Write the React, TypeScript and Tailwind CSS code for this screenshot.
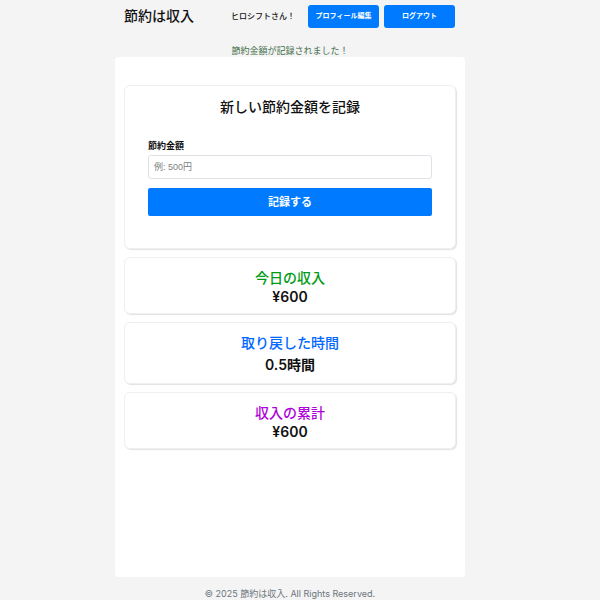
import React from "react";

type StatProps = { title: string; value: string; color: string; lead: string };

function StatCard({ title, value, color, lead }: StatProps) {
  return (
    <section className="rounded-md border border-[#efefef] bg-white pt-2 pb-2 text-center text-[14px] font-medium shadow-[1px_1px_1px_#e2e2e2]">
      <h2 className={`leading-[23px] ${color}`}>{title}</h2>
      <p className={`font-semibold text-[#111] ${lead}`}>{value}</p>
    </section>
  );
}

export default function App() {
  return (
    <div className="min-h-screen bg-[#f4f4f4] pr-5 font-['Inter','Noto_Sans_CJK_JP',sans-serif] text-[#111]">
      <div className="mx-auto max-w-[350px]">
        <header className="flex items-center pt-1 pr-[10px] pl-[9px]">
          <h1 className="text-[14px] leading-[24px] font-medium">節約は収入</h1>
          <nav className="ml-auto flex items-center gap-[5px]">
            <span className="mr-2 text-[8px] font-medium">ヒロシフトさん！</span>
            <button type="button" className="h-[23px] w-[71px] rounded-[3px] bg-[#007bff] text-[7px] font-bold text-white">
              プロフィール編集
            </button>
            <button type="button" className="h-[23px] w-[71px] rounded-[3px] bg-[#007bff] text-[7px] font-bold text-white">
              ログアウト
            </button>
          </nav>
        </header>

        <p role="status" className="mt-4 text-center text-[9px] leading-[13px] text-[#44704a]">
          節約金額が記録されました！
        </p>

        <main className="flex min-h-[520px] flex-col gap-2 rounded-[4px] bg-white px-[9px] pt-7">
          <section className="rounded-md border border-[#efefef] bg-white px-[23px] pt-[9px] pb-8 shadow-[1px_1px_1px_#e2e2e2]">
            <h2 className="text-center text-[14px] leading-[24px] font-medium">新しい節約金額を記録</h2>
            <form className="mt-5 flex flex-col" onSubmit={(e) => e.preventDefault()}>
              <label htmlFor="amount" className="text-[9px] leading-[14px] font-semibold">
                節約金額
              </label>
              <input
                id="amount"
                type="text"
                placeholder="例: 500円"
                className="mt-[2px] h-6 rounded-[3px] border border-[#dee2e6] bg-white px-[5px] font-['Liberation_Sans','Noto_Sans_CJK_JP',sans-serif] text-[9px] placeholder:text-[#808080]"
              />
              <button type="submit" className="mt-[9px] h-7 rounded-[2px] bg-[#007bff] text-[11px] font-bold text-white">
                記録する
              </button>
            </form>
          </section>
          <StatCard title="今日の収入" value="¥600" color="text-[#009b14]" lead="leading-[16px]" />
          <StatCard title="取り戻した時間" value="0.5時間" color="text-[#0068ff]" lead="leading-[21px]" />
          <StatCard title="収入の累計" value="¥600" color="text-[#ae00d8]" lead="leading-[16px]" />
        </main>

        <footer className="pt-[10px] text-center text-[9px] leading-[13px] text-[#6c757d]">
          © 2025 節約は収入. All Rights Reserved.
        </footer>
      </div>
    </div>
  );
}
